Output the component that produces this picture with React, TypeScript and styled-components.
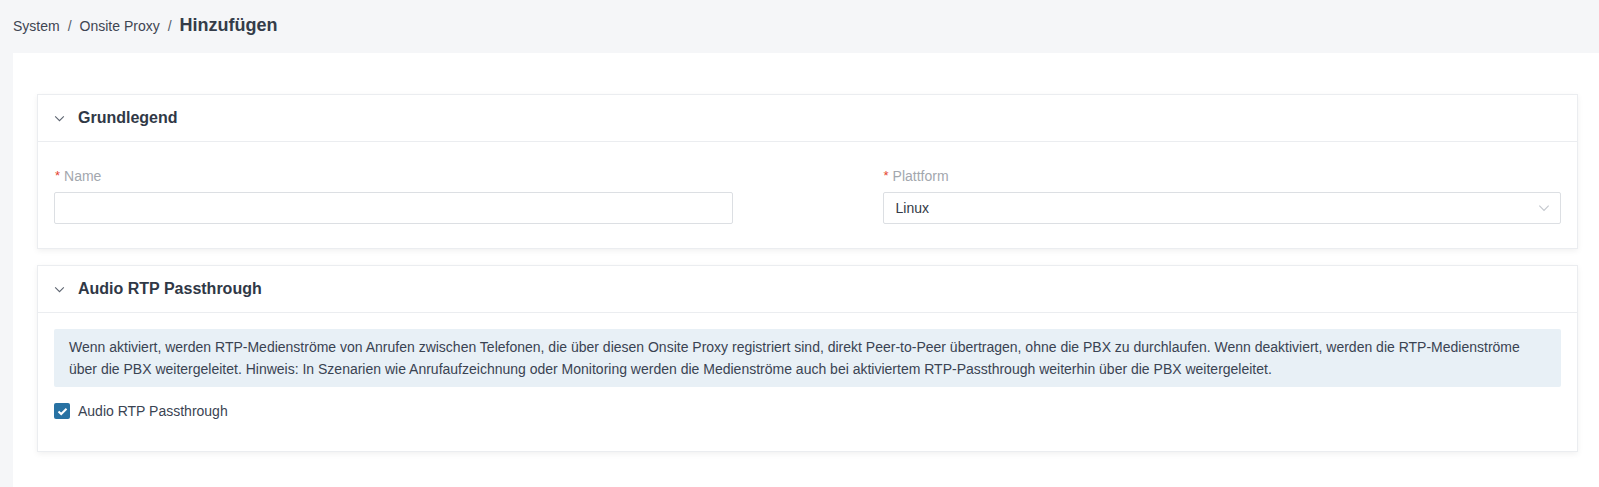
import React from "react";
import styled, { createGlobalStyle } from "styled-components";

const GlobalStyle = createGlobalStyle`
  html, body {
    margin: 0;
    padding: 0;
    background: #f5f6f8;
    font-family: "Liberation Sans", Arial, sans-serif;
    color: #333a46;
  }
  * { box-sizing: border-box; }
`;

const Page = styled.div`
  min-height: 487px;
  display: flex;
  flex-direction: column;
`;

const Breadcrumb = styled.nav`
  display: flex;
  align-items: baseline;
  height: 53px;
  padding: 15px 0 0 13px;
  font-size: 14px;
  color: #3e4552;
`;

const Crumb = styled.span`
  color: #3e4552;
`;

const Sep = styled.span`
  margin: 0 8px;
  color: #555c68;
`;

const Current = styled.span`
  font-size: 18px;
  font-weight: bold;
  color: #343c49;
`;

const Panel = styled.main`
  flex: 1;
  margin-left: 13px;
  background: #ffffff;
  padding: 41px 21px 24px 24px;
  display: flex;
  flex-direction: column;
  gap: 16px;
`;

const Card = styled.section`
  background: #fff;
  border: 1px solid #ebedf0;
  box-shadow: 0 2px 6px rgba(0, 0, 0, 0.06);
`;

const CardHeader = styled.header`
  height: 47px;
  display: flex;
  align-items: center;
  padding-left: 15px;
  border-bottom: 1px solid #ebedf0;
  gap: 12px;
`;

const Chevron = styled.svg`
  flex: none;
`;

const CardTitle = styled.h2`
  margin: 0;
  font-size: 16px;
  font-weight: bold;
  color: #303846;
`;

const CardBody = styled.div<{ $pad: string }>`
  padding: ${(p) => p.$pad};
`;

const FormGrid = styled.div`
  display: grid;
  grid-template-columns: 1fr 1fr;
  column-gap: 150px;
`;

const Field = styled.div`
  display: flex;
  flex-direction: column;
`;

const Label = styled.label`
  font-size: 14px;
  color: #a3a7ae;
  height: 17px;
  margin-bottom: 8px;
  display: flex;
  align-items: center;
`;

const Star = styled.span`
  color: #e5432f;
  margin: 0 4px 0 1px;
  font-size: 13px;
`;

const Input = styled.input`
  height: 32px;
  width: 100%;
  border: 1px solid #dcdfe3;
  border-radius: 2px;
  padding: 0 12px;
  font-family: inherit;
  font-size: 14px;
  outline: none;
`;

const Select = styled.div`
  height: 32px;
  border: 1px solid #dcdfe3;
  border-radius: 2px;
  padding: 0 9px 0 12px;
  display: flex;
  align-items: center;
  justify-content: space-between;
  font-size: 14px;
  color: #333a46;
`;

const Info = styled.div`
  background: #e8f0f6;
  border-radius: 2px;
  padding: 7px 15px;
  font-size: 14px;
  line-height: 22px;
  color: #3a4352;
`;

const CheckRow = styled.label`
  display: flex;
  align-items: center;
  gap: 8px;
  margin-top: 16px;
  font-size: 14px;
  color: #3a4352;
`;

const CheckBox = styled.span`
  width: 16px;
  height: 16px;
  border-radius: 2px;
  background: #2872a3;
  display: flex;
  align-items: center;
  justify-content: center;
`;

const DownIcon = ({ color, size }: { color: string; size: number }) => (
  <Chevron viewBox="0 0 12 12" width={size} height={size}>
    <path d="M2 4 L6 8 L10 4" fill="none" stroke={color} strokeWidth="1" />
  </Chevron>
);

export default function App() {
  return (
    <Page>
      <GlobalStyle />
      <Breadcrumb>
        <Crumb>System</Crumb>
        <Sep>/</Sep>
        <Crumb>Onsite Proxy</Crumb>
        <Sep>/</Sep>
        <Current>Hinzufügen</Current>
      </Breadcrumb>
      <Panel>
        <Card>
          <CardHeader>
            <DownIcon color="#5d6470" size={13} />
            <CardTitle>Grundlegend</CardTitle>
          </CardHeader>
          <CardBody $pad="25px 16px 24px 16px">
            <FormGrid>
              <Field>
                <Label>
                  <Star>*</Star>Name
                </Label>
                <Input />
              </Field>
              <Field>
                <Label>
                  <Star>*</Star>Plattform
                </Label>
                <Select>
                  <span>Linux</span>
                  <DownIcon color="#c4c8ce" size={14} />
                </Select>
              </Field>
            </FormGrid>
          </CardBody>
        </Card>
        <Card>
          <CardHeader>
            <DownIcon color="#5d6470" size={13} />
            <CardTitle>Audio RTP Passthrough</CardTitle>
          </CardHeader>
          <CardBody $pad="16px 16px 32px 16px">
            <Info>
              Wenn aktiviert, werden RTP-Medienströme von Anrufen zwischen Telefonen, die über diesen Onsite Proxy
              registriert sind, direkt Peer-to-Peer übertragen, ohne die PBX zu durchlaufen. Wenn deaktiviert, werden
              die RTP-Medienströme über die PBX weitergeleitet. Hinweis: In Szenarien wie Anrufaufzeichnung oder
              Monitoring werden die Medienströme auch bei aktiviertem RTP-Passthrough weiterhin über die PBX
              weitergeleitet.
            </Info>
            <CheckRow>
              <CheckBox>
                <svg width="11" height="9" viewBox="0 0 11 9">
                  <path d="M1.5 4.5 L4.2 7 L9.5 1.8" fill="none" stroke="#fff" strokeWidth="2" />
                </svg>
              </CheckBox>
              Audio RTP Passthrough
            </CheckRow>
          </CardBody>
        </Card>
      </Panel>
    </Page>
  );
}
